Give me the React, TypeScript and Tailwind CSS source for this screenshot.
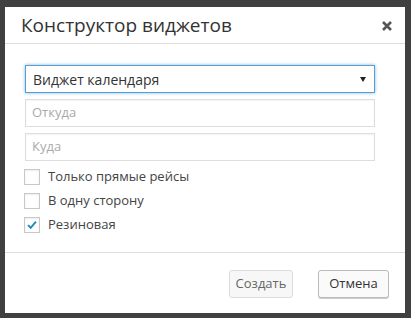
import { useState } from "react";

const font = { fontFamily: '"Open Sans", "Noto Sans", sans-serif' };

function Check({ checked, label }: { checked: boolean; label: string }) {
  return (
    <label className="flex h-[16px] items-center gap-[8px]">
      <span className="flex h-[16px] w-[16px] items-center justify-center border border-[#c8c8c8] bg-white shadow-[inset_0_1px_2px_rgba(0,0,0,0.08)]">
        {checked && (
          <svg viewBox="0 0 16 16" className="h-[14px] w-[14px]">
            <path d="M3.5 8.2 L6.5 11.2 L12.5 4.2" fill="none" stroke="#1e8cbe" strokeWidth="2.2" />
          </svg>
        )}
      </span>
      <span className="text-[13px] text-[#444]">{label}</span>
    </label>
  );
}

export default function App() {
  const [widget] = useState("Виджет календаря");
  return (
    <div className="h-[318px] w-[411px] bg-[#404040] pl-[5px] pt-[7px]" style={font}>
      <div className="flex h-[306px] w-[400px] flex-col bg-white">
        <div className="flex h-[37px] items-center justify-between border-b border-[#dddddd] pl-[16px] pr-[12px] pt-[1px]">
          <span className="text-[19px] text-[#333]">Конструктор виджетов</span>
          <svg viewBox="0 0 12 12" className="h-[12px] w-[12px]">
            <path d="M2 2 L10 10 M10 2 L2 10" stroke="#555" strokeWidth="2.6" />
          </svg>
        </div>
        <div className="flex flex-col gap-[6px] pl-[20px] pr-[30px] pt-[21px]">
          <div className="flex h-[28px] items-center justify-between border border-[#5b9dd9] pl-[7px] pr-[8px] shadow-[0_0_3px_rgba(30,140,190,0.6)]">
            <span className="text-[14px] text-[#333]">{widget}</span>
            <svg viewBox="0 0 6 5" className="h-[5px] w-[6px]">
              <path d="M0 0 L6 0 L3 5 Z" fill="#222" />
            </svg>
          </div>
          <div className="flex h-[28px] items-center border border-[#dddddd] px-[6px] shadow-[inset_0_1px_2px_rgba(0,0,0,0.05)]">
            <span className="text-[13px] text-[#aaa]">Откуда</span>
          </div>
          <div className="flex h-[28px] items-center border border-[#dddddd] px-[6px] shadow-[inset_0_1px_2px_rgba(0,0,0,0.05)]">
            <span className="text-[13px] text-[#aaa]">Куда</span>
          </div>
        </div>
        <div className="flex flex-col gap-[8px] pl-[19px] pt-[8px]">
          <Check checked={false} label="Только прямые рейсы" />
          <Check checked={false} label="В одну сторону" />
          <Check checked label="Резиновая" />
        </div>
        <div className="mt-[19px] flex flex-1 items-center justify-end gap-[25px] border-t border-[#dddddd] pr-[16px] pt-[1px]">
          <button className="h-[28px] w-[64px] rounded-[3px] border border-[#dddddd] bg-[#f7f7f7] text-[13px] text-[#666]">
            Создать
          </button>
          <button className="h-[28px] w-[71px] rounded-[3px] border border-[#bbbbbb] bg-[#fafafa] text-[13px] text-[#333] shadow-[0_1px_0_#ccc]">
            Отмена
          </button>
        </div>
      </div>
    </div>
  );
}
